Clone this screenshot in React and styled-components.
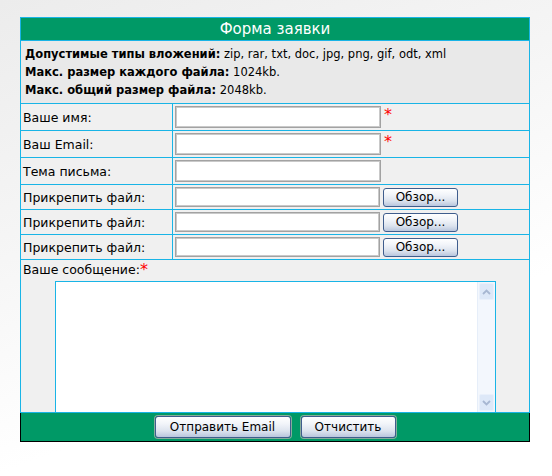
import React from "react";
import styled, { createGlobalStyle } from "styled-components";

const GlobalStyle = createGlobalStyle`
  html, body {
    margin: 0;
    height: 100%;
  }
  body {
    background: linear-gradient(160deg, #ececec 0%, #f5f5f5 35%, #ffffff 70%);
    font-family: "DejaVu Sans", Verdana, sans-serif;
    color: #000;
  }
`;

const CYAN = "#19b4e6";
const GREEN = "#009966";

const Page = styled.div`
  padding: 17px 0 0 20px;
`;

const Form = styled.div`
  width: 510px;
  box-sizing: border-box;
  border: 1px solid ${CYAN};
  background: #f0f0f0;
`;

const Header = styled.div`
  height: 22px;
  line-height: 22px;
  background: ${GREEN};
  color: #fff;
  font-size: 15px;
  text-align: center;
`;

const Info = styled.div`
  height: 63px;
  box-sizing: border-box;
  border-top: 1px solid ${CYAN};
  background: #e9e9e9;
  padding: 4px 4px 0;
  font-size: 11.5px;
  line-height: 18px;
`;

const Row = styled.div`
  display: flex;
  height: ${(p) => p.h}px;
  border-top: 1px solid ${CYAN};
`;

const Label = styled.div`
  width: 152px;
  flex-shrink: 0;
  border-right: 1px solid ${CYAN};
  padding-left: 2px;
  box-sizing: border-box;
  display: flex;
  align-items: center;
  font-size: 12.5px;
`;

const Field = styled.div`
  flex: 1;
  display: flex;
  align-items: ${(p) => (p.top ? "flex-start" : "center")};
  padding-left: 2px;
  gap: 3px;
`;

const TextInput = styled.input`
  width: ${(p) => p.w || 206}px;
  height: ${(p) => p.hgt || 22}px;
  box-sizing: border-box;
  border: 1px solid #a2a2a2;
  box-shadow: inset 0 0 0 1px #c9c9c9;
  background: #fff;
  margin: ${(p) => (p.top ? "2px 0 0" : "0")};
  outline: none;
`;

const Star = styled.span`
  color: #f00;
  font-size: 16px;
  line-height: 1;
  margin-top: ${(p) => p.mt ?? 3}px;
`;

const Button = styled.button`
  width: ${(p) => p.w}px;
  height: ${(p) => p.hgt}px;
  padding: 0;
  border: 1px solid #3f5d8d;
  border-radius: 3px;
  background: linear-gradient(#ffffff 0%, #f1f4f9 35%, #dce3ee 70%, #b9c6dd 100%);
  font-family: "DejaVu Sans", Tahoma, sans-serif;
  font-size: 12px;
  color: #000;
  box-shadow: ${(p) => (p.outer ? "0 0 0 1px #86ad9c" : "none")};
`;

const Message = styled.div`
  height: 153px;
  box-sizing: border-box;
  border-top: 1px solid ${CYAN};
  padding: 3px 0 0 2px;
`;

const MessageLabel = styled.div`
  font-size: 12.5px;
  line-height: 14px;
  display: flex;
  align-items: flex-start;
`;

const AreaBox = styled.div`
  margin: 3px 0 0 32px;
  width: 441px;
  height: 132px;
  box-sizing: border-box;
  border: 1px solid ${CYAN};
  background: #fff;
  display: flex;
`;

const Area = styled.textarea`
  flex: 1;
  border: none;
  resize: none;
  outline: none;
  background: transparent;
`;

const Scrollbar = styled.div`
  width: 17px;
  background: #f3f7fd;
  border-left: 1px solid #e6eef9;
  display: flex;
  flex-direction: column;
  justify-content: space-between;
`;

const ScrollBtn = styled.div`
  height: 17px;
  margin: 1px;
  border-radius: 2px;
  background: #dde8f8;
  border: 1px solid #e9f0fb;
  box-sizing: border-box;
  display: flex;
  align-items: center;
  justify-content: center;
`;

const Footer = styled.div`
  width: 510px;
  height: 29px;
  box-sizing: border-box;
  border: 1px solid #000;
  border-top: none;
  background: ${GREEN};
  display: flex;
  justify-content: center;
  align-items: center;
  gap: 10px;
`;

const Chevron = ({ up }) => (
  <svg width="9" height="6" viewBox="0 0 9 6">
    <path
      d={up ? "M1 5 L4.5 1.5 L8 5" : "M1 1 L4.5 4.5 L8 1"}
      fill="none"
      stroke="#a7b7d2"
      strokeWidth="1.8"
    />
  </svg>
);

const FileRow = () => (
  <Row h={24}>
    <Label>Прикрепить файл:</Label>
    <Field>
      <TextInput w={205} hgt={20} />
      <Button w={75} hgt={19}>Обзор...</Button>
    </Field>
  </Row>
);

const App = () => {
  return (
    <Page>
      <GlobalStyle />
      <Form>
        <Header>Форма заявки</Header>
        <Info>
          <div>
            <b>Допустимые типы вложений:</b> zip, rar, txt, doc, jpg, png, gif, odt, xml
          </div>
          <div>
            <b>Макс. размер каждого файла:</b> 1024kb.
          </div>
          <div>
            <b>Макс. общий размер файла:</b> 2048kb.
          </div>
        </Info>
        <Row h={26}>
          <Label>Ваше имя:</Label>
          <Field top>
            <TextInput top />
            <Star>*</Star>
          </Field>
        </Row>
        <Row h={26}>
          <Label>Ваш Email:</Label>
          <Field top>
            <TextInput top />
            <Star>*</Star>
          </Field>
        </Row>
        <Row h={26}>
          <Label>Тема письма:</Label>
          <Field>
            <TextInput />
          </Field>
        </Row>
        <FileRow />
        <FileRow />
        <FileRow />
        <Message>
          <MessageLabel>
            Ваше сообщение:<Star mt={-1}>*</Star>
          </MessageLabel>
          <AreaBox>
            <Area />
            <Scrollbar>
              <ScrollBtn>
                <Chevron up />
              </ScrollBtn>
              <ScrollBtn>
                <Chevron />
              </ScrollBtn>
            </Scrollbar>
          </AreaBox>
        </Message>
      </Form>
      <Footer>
        <Button w={136} hgt={22} outer>
          Отправить Email
        </Button>
        <Button w={95} hgt={22} outer>
          Отчистить
        </Button>
      </Footer>
    </Page>
  );
};

export default App;
